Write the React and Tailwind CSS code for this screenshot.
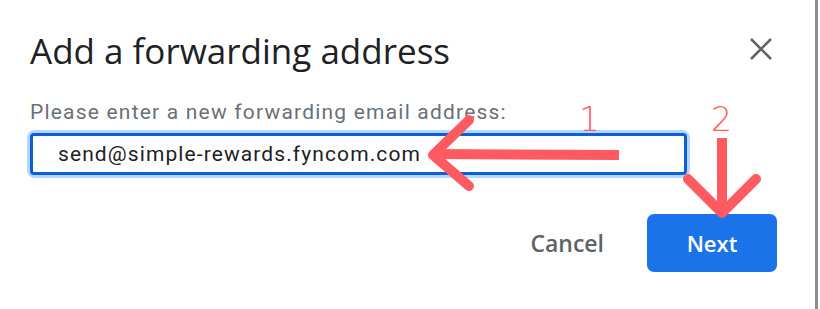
export default function App() {
    return (
        <div className="relative w-[820px] h-[309px] overflow-hidden bg-white">
            {/* Dialog */}
            <div className="flex h-full w-[818px] flex-col border-r-[3px] border-[#8d8d8d] pl-[30px] pr-[38px] pt-[29px] font-['Roboto',sans-serif]">
                <div className="flex items-start justify-between">
                    <h2 className="font-['Open_Sans',sans-serif] text-[35px] leading-[44px] text-[#202124]">
                        Add a forwarding address
                    </h2>
                    <button type="button" className="mr-[5px] mt-[9px] text-[#5f6368]">
                        <svg width="22" height="22" viewBox="0 0 22 22" fill="none" stroke="currentColor" strokeWidth="2.6">
                            <path d="M1 1 L21 21 M21 1 L1 21" />
                        </svg>
                    </button>
                </div>

                <label className="mt-[27px] text-[21px] leading-[24px] tracking-[1.2px] text-[#6a7079]">
                    Please enter a new forwarding email address:
                </label>

                <div className="mt-[9px] w-[657px] rounded-[5px] ring-[3px] ring-[#b5d6fb]">
                    <input
                        type="text"
                        defaultValue="send@simple-rewards.fyncom.com"
                        className="h-[42px] w-full rounded-[4px] border-[3px] border-[#0b5fd9] pl-[25px] text-[21px] tracking-[1.1px] text-[#202124] outline-none"
                    />
                </div>

                <div className="mt-[39px] flex items-center justify-end gap-[43px]">
                    <button type="button" className="font-['Open_Sans',sans-serif] text-[23px] font-semibold text-[#5f6368]">
                        Cancel
                    </button>
                    <button type="button" className="h-[58px] w-[130px] rounded-[7px] bg-[#1a73e8] font-['Open_Sans',sans-serif] text-[22px] font-semibold text-white">
                        Next
                    </button>
                </div>
            </div>

            {/* Annotations */}
            <span className="pointer-events-none absolute left-[579px] top-[103px] font-['DejaVu_Sans',sans-serif] text-[33px] font-extralight leading-none text-[#ff5a60]">
                1
            </span>
            <span className="pointer-events-none absolute left-[711px] top-[103px] font-['DejaVu_Sans',sans-serif] text-[33px] font-extralight leading-none text-[#ff5a60]">
                2
            </span>
            <svg className="pointer-events-none absolute left-0 top-0" width="820" height="309" viewBox="0 0 820 309">
                <g stroke="#ff5a60" strokeWidth="10" strokeLinecap="round" strokeLinejoin="round" fill="none">
                    <path d="M619 155 L433 154" strokeLinecap="butt" />
                    <path d="M469 120 L433 155 L469 186" />
                    <path d="M722 138 L722 213" strokeLinecap="butt" />
                    <path d="M688 179 L722 213 L756 179" />
                </g>
            </svg>
        </div>
    );
}
